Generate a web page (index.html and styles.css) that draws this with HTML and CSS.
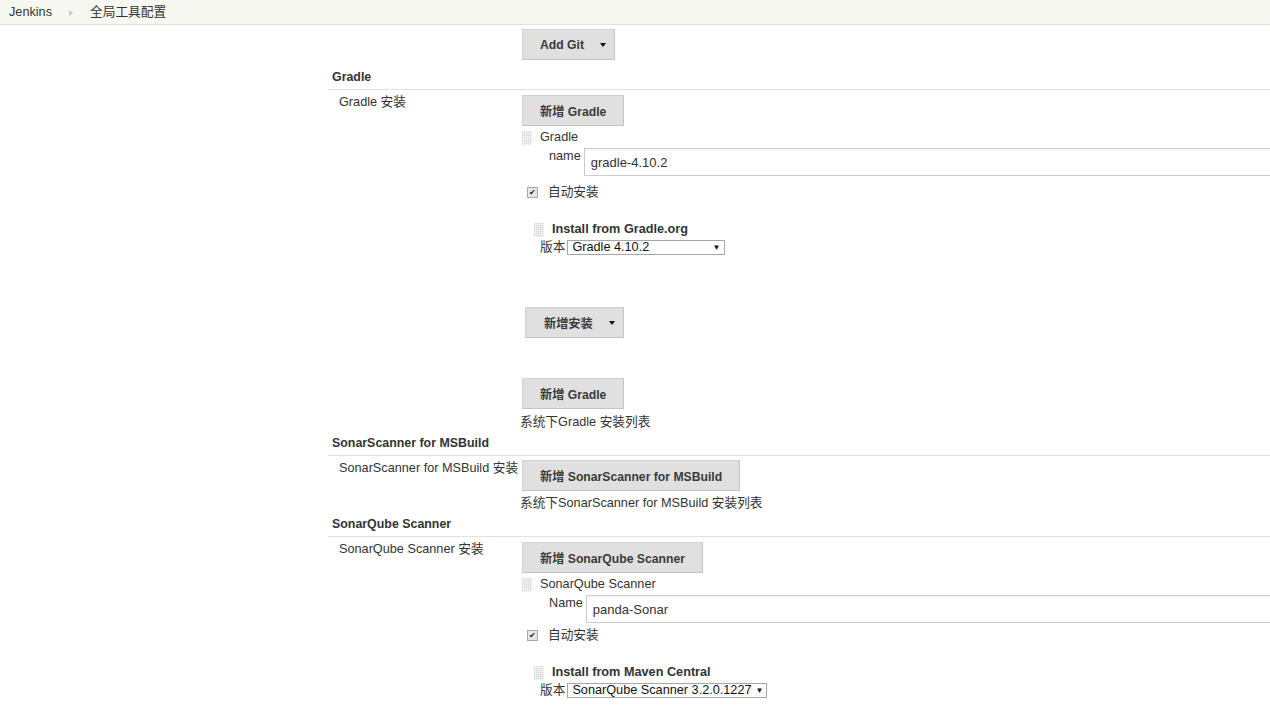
FILE: index.html
```html
<!DOCTYPE html>
<html lang="zh">
<head>
  <meta charset="UTF-8">
  <title>全局工具配置 [Jenkins]</title>
  <link rel="stylesheet" href="styles.css">
</head>
<body>
  <div class="breadcrumbs">
    <span class="crumb">Jenkins</span>
    <span class="crumb-sep"></span>
    <span class="crumb">全局工具配置</span>
  </div>

  <div class="main">
    <div class="row">
      <div class="row-label"></div>
      <div class="setting">
        <button type="button" class="btn btn-menu btn-first">Add Git <span class="caret"></span></button>
      </div>
    </div>

    <!-- Gradle -->
    <div class="section-header">Gradle</div>
    <div class="row">
      <div class="row-label">Gradle 安装</div>
      <div class="setting">
        <button type="button" class="btn">新增 Gradle</button>
        <div class="repeated">
          <div class="handle-row"><span class="handle"></span>Gradle</div>
          <div class="field-row">
            <span class="field-name">name</span>
            <input class="field-input" type="text" value="gradle-4.10.2">
          </div>
          <div class="check-row"><span class="checkbox">&#10004;</span>自动安装</div>
          <div class="installer">
            <div class="handle-row"><span class="handle"></span><strong>Install from Gradle.org</strong></div>
            <div class="select-row">
              版本
              <span class="select select-gradle">Gradle 4.10.2<span class="select-arrow">&#9660;</span></span>
            </div>
          </div>
          <button type="button" class="btn btn-menu btn-install">新增安装 <span class="caret"></span></button>
        </div>
        <button type="button" class="btn btn-bottom">新增 Gradle</button>
        <div class="description">系统下Gradle 安装列表</div>
      </div>
    </div>

    <!-- SonarScanner for MSBuild -->
    <div class="section-header">SonarScanner for MSBuild</div>
    <div class="row">
      <div class="row-label">SonarScanner for MSBuild 安装</div>
      <div class="setting">
        <button type="button" class="btn btn-tight">新增 SonarScanner for MSBuild</button>
        <div class="description description-tight">系统下SonarScanner for MSBuild 安装列表</div>
      </div>
    </div>

    <!-- SonarQube Scanner -->
    <div class="section-header">SonarQube Scanner</div>
    <div class="row">
      <div class="row-label">SonarQube Scanner 安装</div>
      <div class="setting">
        <button type="button" class="btn">新增 SonarQube Scanner</button>
        <div class="repeated">
          <div class="handle-row"><span class="handle"></span>SonarQube Scanner</div>
          <div class="field-row">
            <span class="field-name">Name</span>
            <input class="field-input" type="text" value="panda-Sonar">
          </div>
          <div class="check-row check-row-tight"><span class="checkbox">&#10004;</span>自动安装</div>
          <div class="installer">
            <div class="handle-row"><span class="handle"></span><strong>Install from Maven Central</strong></div>
            <div class="select-row">
              版本
              <span class="select select-sonar">SonarQube Scanner 3.2.0.1227<span class="select-arrow">&#9660;</span></span>
            </div>
          </div>
        </div>
      </div>
    </div>
  </div>
</body>
</html>
```

FILE: styles.css
```css
body {
  margin: 0;
  font-family: 'Liberation Sans', Arial, 'Noto Sans CJK SC', sans-serif;
  font-size: 12.7px;
  line-height: 17px;
  color: #333;
  background: #fff;
  overflow: hidden;
}

.breadcrumbs {
  height: 25px;
  box-sizing: border-box;
  background: #f8f8f3;
  border-bottom: 1px solid #e3e3dc;
  display: flex;
  align-items: center;
  padding-left: 9px;
}

.crumb { color: #333; }

.crumb-sep {
  width: 0;
  height: 0;
  border-left: 4px solid #c8c8c8;
  border-top: 3px solid transparent;
  border-bottom: 3px solid transparent;
  margin: 1px 17px 0 17px;
}

.main {
  margin-left: 328px;
}

.row {
  display: grid;
  grid-template-columns: 192px 1fr;
}

.row-label {
  padding: 4px 0 0 11px;
  white-space: nowrap;
}

.setting {
  display: flex;
  flex-direction: column;
  align-items: flex-start;
  min-width: 0;
}

.section-header {
  font-weight: bold;
  font-size: 12.4px;
  padding: 4px 0 3px 4px;
  border-bottom: 1px solid #e2e2e2;
}

.btn {
  font-family: inherit;
  font-size: 12.2px;
  font-weight: bold;
  color: #3a3a3a;
  background: #e0e0e0;
  border: 1px solid #d2d2d2;
  border-right-color: #c4c4c4;
  border-bottom-color: #c4c4c4;
  height: 31px;
  padding: 0 17px;
  margin: 5px 0 0 2px;
  display: flex;
  align-items: center;
  white-space: nowrap;
  cursor: pointer;
}

.btn-first { margin-top: 4px; margin-bottom: 5px; }
.btn-tight { margin-top: 4px; }

.btn-menu { padding-right: 8px; }

.caret {
  width: 0;
  height: 0;
  border-top: 4px solid #111;
  border-left: 3px solid transparent;
  border-right: 3px solid transparent;
  margin-left: 16px;
  margin-top: 1px;
}

.btn-install {
  align-self: flex-start;
  margin: 51px 0 0 5px;
  padding-left: 18px;
}

.btn-bottom { margin-top: 40px; }

.repeated {
  display: flex;
  flex-direction: column;
  align-items: stretch;
  align-self: stretch;
}

.handle-row {
  display: flex;
  align-items: center;
  margin: 3px 0 0 2px;
  height: 17px;
  white-space: nowrap;
}

.handle {
  display: inline-block;
  width: 10px;
  height: 14px;
  margin-right: 8px;
  background-image:
    linear-gradient(to right, #e2e2e2 1px, transparent 1px),
    linear-gradient(#e2e2e2 1px, transparent 1px);
  background-size: 2px 2px;
}

.field-row {
  display: flex;
  align-items: flex-start;
  margin-top: 2px;
  padding-left: 29px;
}

.field-name {
  margin-right: 3px;
  line-height: 17px;
}

.field-input {
  flex: 1;
  min-width: 0;
  height: 28px;
  box-sizing: border-box;
  margin-right: -4px;
  border: 1px solid #ccc;
  box-shadow: inset 0 1px 2px rgba(0, 0, 0, 0.06);
  padding: 0 6px;
  font-family: inherit;
  font-size: 13px;
  color: #333;
}

.check-row {
  display: flex;
  align-items: center;
  margin: 8px 0 0 7px;
  height: 17px;
}

.check-row-tight { margin-top: 4px; }

.checkbox {
  width: 9px;
  height: 9px;
  border: 1px solid #a8a8a8;
  background: #e6e6e6;
  font-size: 8px;
  line-height: 9px;
  text-align: center;
  color: #222;
  margin-right: 10px;
}

.installer {
  margin-top: 20px;
}

.installer .handle-row {
  margin: 0 0 0 14px;
}

.installer strong { color: #333; }

.select-row {
  display: flex;
  align-items: center;
  margin: 1px 0 0 20px;
  height: 17px;
  white-space: nowrap;
}

.select {
  display: flex;
  align-items: center;
  justify-content: space-between;
  height: 15px;
  box-sizing: border-box;
  border: 1px solid #a6a6a6;
  color: #111;
  padding: 0 4px;
  margin-left: 2px;
  line-height: 13px;
}

.select-gradle { width: 158px; }
.select-sonar { width: 200px; }

.select-arrow {
  font-size: 8px;
  margin-left: 4px;
}

.description {
  margin-top: 5px;
}

.description-tight { margin-top: 4px; }
```
